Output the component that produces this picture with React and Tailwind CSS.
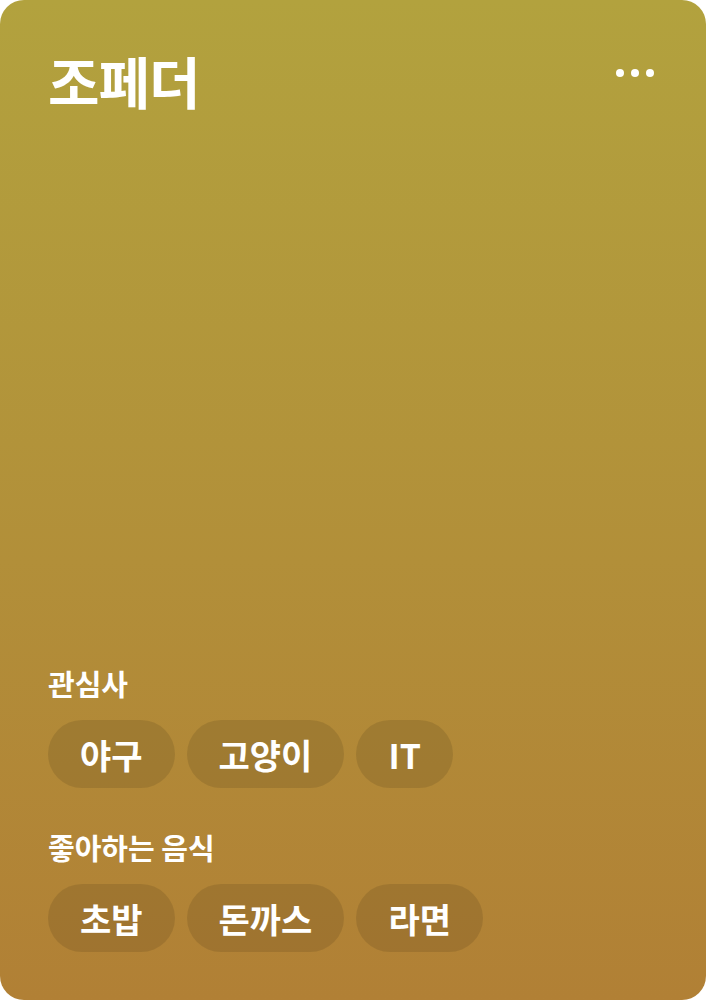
import React from 'react';

const sections = [
  { title: '관심사', items: ['야구', '고양이', 'IT'] },
  { title: '좋아하는 음식', items: ['초밥', '돈까스', '라면'] },
];

const Chip = ({ label }) => (
  <span className="flex h-[68px] items-center rounded-full bg-black/10 px-[32px] text-[34px] font-bold text-white">
    {label}
  </span>
);

export default function App() {
  return (
    <div
      className="flex h-[1000px] w-[706px] flex-col overflow-hidden rounded-[24px] bg-gradient-to-b from-[#b2a23e] to-[#b18035] px-12 pb-12 text-white"
      style={{ fontFamily: '"Noto Sans CJK KR", "Noto Sans", sans-serif' }}
    >
      <div className="flex items-start justify-between pt-[42px]">
        <h1 className="text-[56px] font-bold leading-[76px] tracking-[-1px]">조페더</h1>
        <button className="mr-[4px] mt-[27px] flex gap-[7px]">
          <span className="h-[8px] w-[8px] rounded-full bg-white" />
          <span className="h-[8px] w-[8px] rounded-full bg-white" />
          <span className="h-[8px] w-[8px] rounded-full bg-white" />
        </button>
      </div>
      <div className="flex-1" />
      <div className="flex flex-col gap-[40px]">
        {sections.map((s) => (
          <div key={s.title} className="flex flex-col gap-[18px]">
            <h2 className="text-[29px] font-bold leading-[38px]">{s.title}</h2>
            <div className="flex gap-[12px]">
              {s.items.map((i) => (
                <Chip key={i} label={i} />
              ))}
            </div>
          </div>
        ))}
      </div>
    </div>
  );
}
